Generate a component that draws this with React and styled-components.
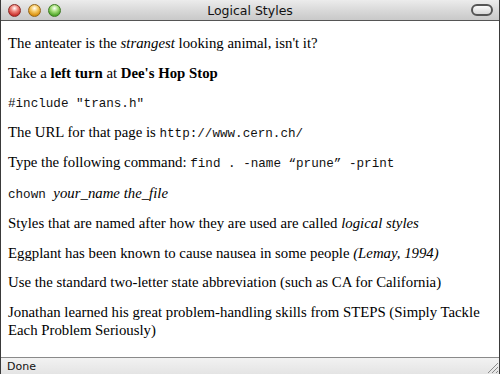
import React from "react";
import styled, { createGlobalStyle } from "styled-components";

const Global = createGlobalStyle`
  html, body {
    margin: 0;
    padding: 0;
    background: #ffffff;
  }
`;

const Window = styled.div`
  width: 500px;
  height: 374px;
  display: flex;
  flex-direction: column;
  box-sizing: border-box;
  border-left: 1px solid #3a3a3a;
  border-right: 1px solid #3a3a3a;
  overflow: hidden;
`;

const TitleBar = styled.div`
  height: 21px;
  flex: none;
  display: flex;
  align-items: center;
  position: relative;
  box-sizing: border-box;
  padding: 0 6px 0 7px;
  background: linear-gradient(#ececec, #d6d6d6 60%, #c9c9c9);
  border-bottom: 1px solid #555;
`;

const Lights = styled.div`
  display: flex;
  gap: 7px;
`;

const Light = styled.span`
  width: 13px;
  height: 13px;
  border-radius: 50%;
  box-sizing: border-box;
  border: 1px solid ${(p) => p.edge};
  background: radial-gradient(circle at 50% 30%, #fff 0, ${(p) => p.tint} 35%, ${(p) => p.color} 75%);
`;

const Title = styled.div`
  position: absolute;
  left: 0;
  right: 0;
  text-align: center;
  font-family: "DejaVu Sans", "Liberation Sans", sans-serif;
  font-size: 12.5px;
  color: #111;
`;

const Pill = styled.span`
  margin-left: auto;
  width: 18px;
  height: 8px;
  border: 2px solid #555;
  border-radius: 6px;
  background: linear-gradient(#fafafa, #d8d8d8);
`;

const Content = styled.div`
  flex: 1;
  padding: 13px 8px 0 7px;
  font-family: "Liberation Serif", "Times New Roman", serif;
  font-size: 14.8px;
  line-height: 18px;
  color: #000;
  background: #fff;
`;

const P = styled.p`
  margin: 0 0 ${(p) => (p.$tight ? "13.5px" : "11.7px")};
`;

const Code = styled.code`
  font-family: "Liberation Mono", "Courier New", monospace;
  font-size: 12.6px;
  line-height: 1;
  color: #111;
  white-space: pre;
`;

const StatusBar = styled.div`
  height: 16px;
  flex: none;
  display: flex;
  align-items: center;
  padding-left: 6px;
  border-top: 1px solid #8a8a8a;
  background: linear-gradient(#f2f2f2, #e4e4e4);
  font-family: "DejaVu Sans", "Liberation Sans", sans-serif;
  font-size: 11px;
  color: #111;
  position: relative;
`;

const Grip = styled.svg`
  position: absolute;
  right: 0;
  bottom: 0;
`;

export default function App() {
  return (
    <>
      <Global />
      <Window>
        <TitleBar>
          <Lights>
            <Light color="#c9302c" tint="#f08a80" edge="#8a2a26" />
            <Light color="#d9900f" tint="#f7cc6a" edge="#94661a" />
            <Light color="#4fa62a" tint="#a9e07e" edge="#3d7a23" />
          </Lights>
          <Title>Logical Styles</Title>
          <Pill />
        </TitleBar>
        <Content>
          <P>
            The anteater is the <i>strangest</i> looking animal, isn't it?
          </P>
          <P>
            Take a <b>left turn</b> at <b>Dee's Hop Stop</b>
          </P>
          <P>
            <Code>#include "trans.h"</Code>
          </P>
          <P>
            The URL for that page is <Code>http://www.cern.ch/</Code>
          </P>
          <P $tight>
            Type the following command: <Code>find . -name “prune” -print</Code>
          </P>
          <P>
            <Code>chown </Code><i>your_name the_file</i>
          </P>
          <P>
            Styles that are named after how they are used are called <i>logical styles</i>
          </P>
          <P>
            Eggplant has been known to cause nausea in some people <i>(Lemay, 1994)</i>
          </P>
          <P>Use the standard two-letter state abbreviation (such as CA for California)</P>
          <P>
            Jonathan learned his great problem-handling skills from STEPS (Simply Tackle
            Each Problem Seriously)
          </P>
        </Content>
        <StatusBar>
          Done
          <Grip width="14" height="14" viewBox="0 0 14 14">
            <path d="M13 3 L3 13 M13 7 L7 13 M13 11 L11 13" stroke="#8a8a8a" strokeWidth="1" />
          </Grip>
        </StatusBar>
      </Window>
    </>
  );
}
